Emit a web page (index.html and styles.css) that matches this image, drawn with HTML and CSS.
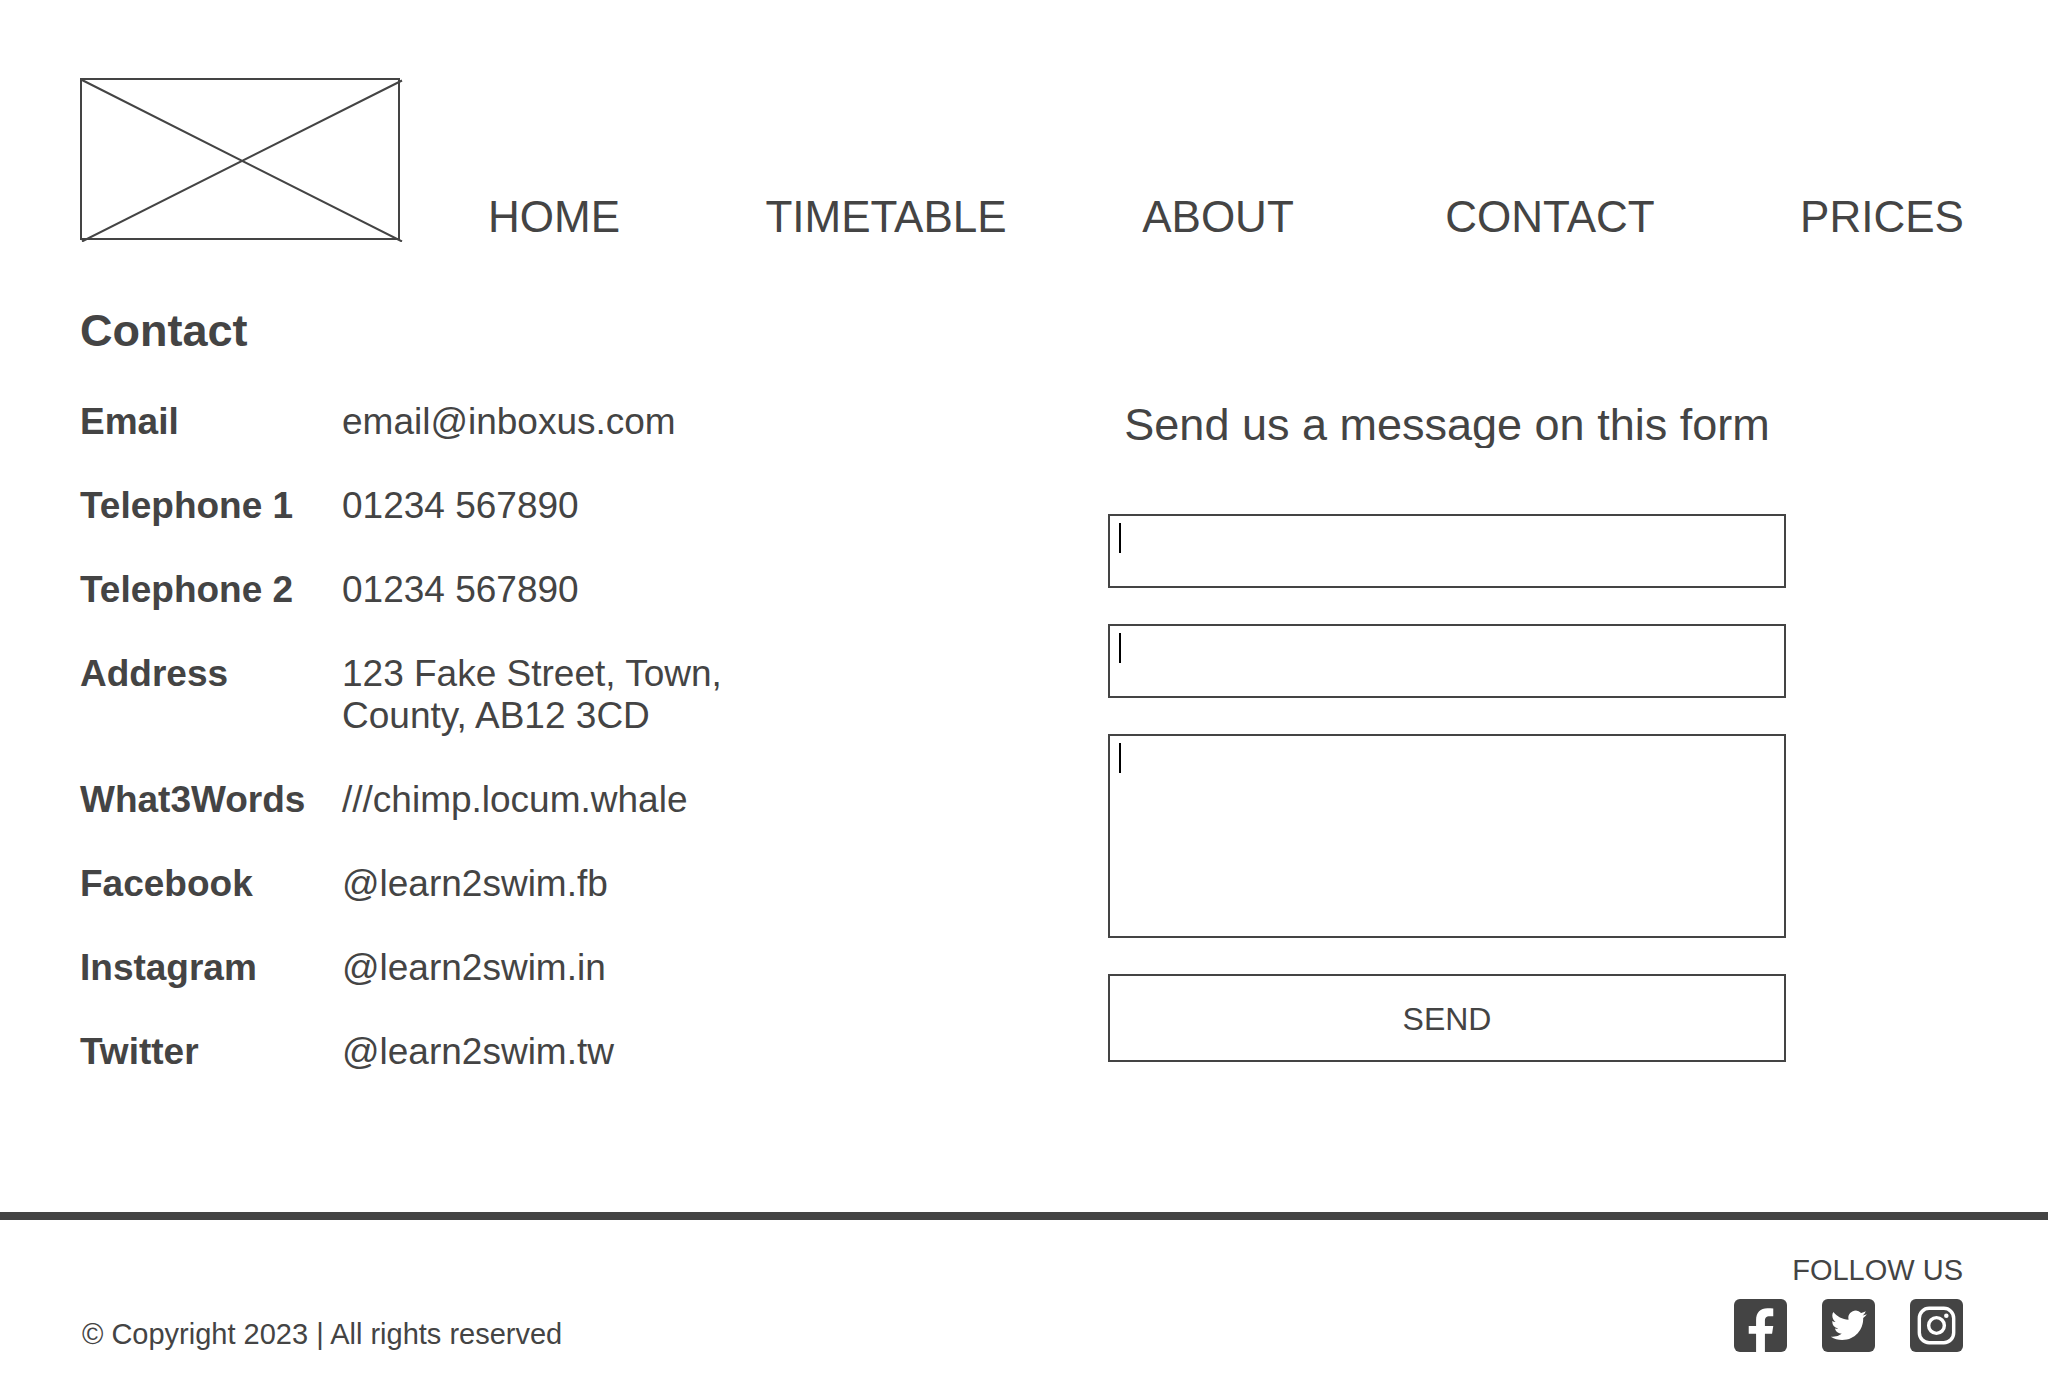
FILE: index.html
```html
<!DOCTYPE html>
<html lang="en">
<head>
<meta charset="utf-8">
<meta name="viewport" content="width=device-width, initial-scale=1">
<title>Contact</title>
<link rel="stylesheet" href="styles.css">
</head>
<body>
<header class="site-header">
  <svg class="logo" viewBox="0 0 324 164" role="img" aria-label="Logo">
    <g fill="none" stroke="currentColor" stroke-width="2">
      <rect x="1" y="1" width="318" height="160"/>
      <path d="M2 2 322 163.500M2 163.500 322 2.500"/>
    </g>
  </svg>
  <nav class="site-nav" aria-label="Main">
    <a href="#home">HOME</a>
    <a href="#timetable">TIMETABLE</a>
    <a href="#about">ABOUT</a>
    <a href="#contact">CONTACT</a>
    <a href="#prices">PRICES</a>
  </nav>
</header>

<main class="content">
  <h1 class="title">Contact</h1>
  <div class="columns">
    <dl class="details">
      <dt>Email</dt><dd>email@inboxus.com</dd>
      <dt>Telephone 1</dt><dd>01234 567890</dd>
      <dt>Telephone 2</dt><dd>01234 567890</dd>
      <dt>Address</dt><dd>123 Fake Street, Town,<br>County, AB12 3CD</dd>
      <dt>What3Words</dt><dd>///chimp.locum.whale</dd>
      <dt>Facebook</dt><dd>@learn2swim.fb</dd>
      <dt>Instagram</dt><dd>@learn2swim.in</dd>
      <dt>Twitter</dt><dd>@learn2swim.tw</dd>
    </dl>
    <form class="message-form">
      <h2 class="form-title">Send us a message on this form</h2>
      <input class="field" type="text" aria-label="Name">
      <input class="field" type="email" aria-label="Email">
      <textarea class="field field-tall" aria-label="Message"></textarea>
      <button class="send" type="submit">SEND</button>
    </form>
  </div>
</main>

<footer class="site-footer">
  <p class="copyright">© Copyright 2023 | All rights reserved</p>
  <div class="social">
    <p class="social-title">FOLLOW US</p>
    <div class="social-links">
      <a href="#facebook" aria-label="Facebook">
        <svg viewBox="0 0 54 54"><rect width="54" height="54" rx="6" fill="currentColor"/><path fill="#fff" d="M22.500 54V35.500H15V27.500h7.500V21.500C22.500 13.500 27 9.300 34 9.300c2.300 0 4.200.2 6 .4V17.500h-3.500c-4 0-5 2-5 4.800v5.200H40l-1.200 8H31.500V54Z"/></svg>
      </a>
      <a href="#twitter" aria-label="Twitter">
        <svg viewBox="0 0 54 54"><rect width="54" height="54" rx="6" fill="currentColor"/><path fill="#fff" transform="translate(9 8.500) scale(1.530)" d="M23.950 4.570a10 10 0 0 1-2.820.780 4.960 4.960 0 0 0 2.160-2.730c-.950.560-2 .960-3.130 1.190a4.920 4.920 0 0 0-8.380 4.480C7.690 8.090 4.070 6.130 1.640 3.160a4.820 4.820 0 0 0-.670 2.480c0 1.710.870 3.210 2.190 4.100a4.900 4.900 0 0 1-2.230-.620v.060a4.920 4.920 0 0 0 3.950 4.830 5 5 0 0 1-2.210.080 4.940 4.940 0 0 0 4.600 3.420A9.870 9.870 0 0 1 0 19.540a14 14 0 0 0 7.550 2.210c9.050 0 14-7.500 14-13.980 0-.210 0-.420-.020-.630A9.940 9.940 0 0 0 24 4.590Z"/></svg>
      </a>
      <a href="#instagram" aria-label="Instagram">
        <svg viewBox="0 0 54 54"><rect width="54" height="54" rx="6" fill="currentColor"/><g fill="none" stroke="#fff" stroke-width="3.500"><rect x="9.500" y="9.500" width="35" height="35" rx="10"/><circle cx="27" cy="27" r="8"/></g><circle cx="37" cy="17" r="2.300" fill="#fff"/></svg>
      </a>
    </div>
  </div>
</footer>
</body>
</html>
```
FILE: styles.css
```css
* {
  box-sizing: border-box;
}

body {
  margin: 0;
  background: #fff;
  color: #444;
  font-family: "Liberation Sans", Arial, sans-serif;
}

h1, h2, p, dl, dd {
  margin: 0;
}

a {
  color: inherit;
  text-decoration: none;
}

.site-header {
  display: grid;
  grid-template-columns: 308px 1fr;
  align-items: end;
  padding: 78px 0 0 80px;
}

.logo {
  display: block;
  width: 324px;
  height: 164px;
}

.site-nav {
  display: grid;
  grid-template-columns: repeat(5, 1fr);
  text-align: center;
  font-size: 44px;
  line-height: 50px;
}

.content {
  padding: 64px 80px 0;
}

.title {
  font-size: 45px;
  line-height: 50px;
}

.columns {
  display: grid;
  grid-template-columns: 1028fr 678fr;
  align-items: start;
  padding: 45px 182px 0 0;
}

.details {
  display: grid;
  grid-template-columns: 262px 1fr;
  row-gap: 42px;
  font-size: 37px;
  line-height: 42px;
}

.details dt {
  font-weight: bold;
}

.message-form {
  display: flex;
  flex-direction: column;
  gap: 36px;
}

.form-title {
  height: 47px;
  margin-bottom: 30px;
  overflow: hidden;
  font-size: 45px;
  font-weight: normal;
  line-height: 48px;
  text-align: center;
}

/* Each field shows a caret mark in its top left corner. */
.field {
  display: block;
  width: 100%;
  height: 74px;
  padding: 6px 16px;
  border: 2px solid #444;
  border-radius: 0;
  outline: 0;
  background: linear-gradient(#000, #000) 9px 7px / 2px 30px no-repeat #fff;
  color: inherit;
  font: 32px "Liberation Sans", Arial, sans-serif;
  resize: none;
}

.field-tall {
  height: 204px;
}

.send {
  height: 88px;
  padding: 2px 0 0;
  border: 2px solid #444;
  background: #fff;
  color: inherit;
  font: 32px/36px "Liberation Sans", Arial, sans-serif;
}

.site-footer {
  display: flex;
  align-items: flex-end;
  justify-content: space-between;
  margin-top: 139px;
  padding: 34px 85px 38px 82px;
  border-top: 8px solid #444;
  font-size: 29px;
  line-height: 32px;
}

.copyright {
  padding-bottom: 2px;
}

.social {
  display: flex;
  flex-direction: column;
  align-items: flex-end;
  gap: 13px;
}

.social-links {
  display: flex;
  gap: 35px;
}

.social-links svg {
  display: block;
  width: 53px;
  height: 53px;
}
```
